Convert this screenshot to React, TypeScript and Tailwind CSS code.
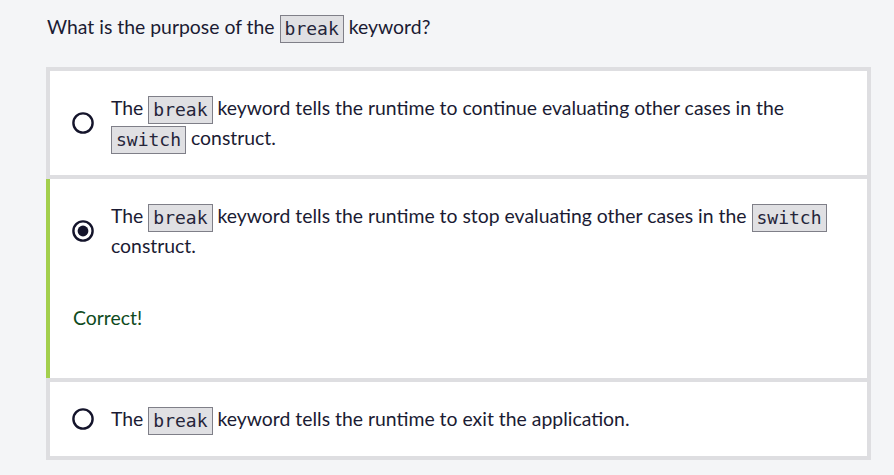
import React from "react";

const Code = ({ children }: { children: React.ReactNode }) => (
  <code
    className="inline-block align-middle border border-[#7f7f88] bg-[#e0e0e3] px-[4px] py-[2px] text-[18px] leading-[22px] text-[#25253a] -my-[4px]"
    style={{ fontFamily: '"DejaVu Sans Mono", monospace' }}
  >
    {children}
  </code>
);

const Radio = ({ checked }: { checked?: boolean }) => (
  <svg width="22" height="22" viewBox="0 0 22 22" className="shrink-0">
    <circle cx="11" cy="11" r="9.6" fill="white" stroke="#14142b" strokeWidth="2.4" />
    {checked && <circle cx="11" cy="11" r="5.4" fill="#14142b" />}
  </svg>
);

export default function App() {
  return (
    <div
      className="min-h-[475px] w-full bg-[#f4f5f7] text-[#1b1b33] text-[19.4px] leading-[30px]"
      style={{ fontFamily: 'Lato, "Noto Sans", sans-serif' }}
    >
      <div className="pl-[47px] pt-[12px] h-[67px]">
        What is the purpose of the <Code>break</Code> keyword?
      </div>
      <div className="ml-[46px] w-[825px] bg-[#dedee1] p-[4px] flex flex-col gap-[4px]">
        <div className="bg-white pl-[22px] pr-[24px] py-[22px] flex items-center">
          <Radio />
          <div className="ml-[17px]">
            The <Code>break</Code> keyword tells the runtime to continue evaluating other cases in the{" "}
            <Code>switch</Code> construct.
          </div>
        </div>
        <div className="bg-white -ml-[4px] border-l-4 border-[#a3cf4d] pl-[22px] pr-[24px] pt-[22px] pb-[45px]">
          <div className="flex items-center">
            <Radio checked />
            <div className="ml-[17px]">
              The <Code>break</Code> keyword tells the runtime to stop evaluating other cases in the{" "}
              <Code>switch</Code> construct.
            </div>
          </div>
          <div className="mt-[42px] pl-[1px] text-[#0f4a20]">Correct!</div>
        </div>
        <div className="bg-white pl-[22px] pr-[24px] py-[22px] flex items-center">
          <Radio />
          <div className="ml-[17px]">
            The <Code>break</Code> keyword tells the runtime to exit the application.
          </div>
        </div>
      </div>
    </div>
  );
}
